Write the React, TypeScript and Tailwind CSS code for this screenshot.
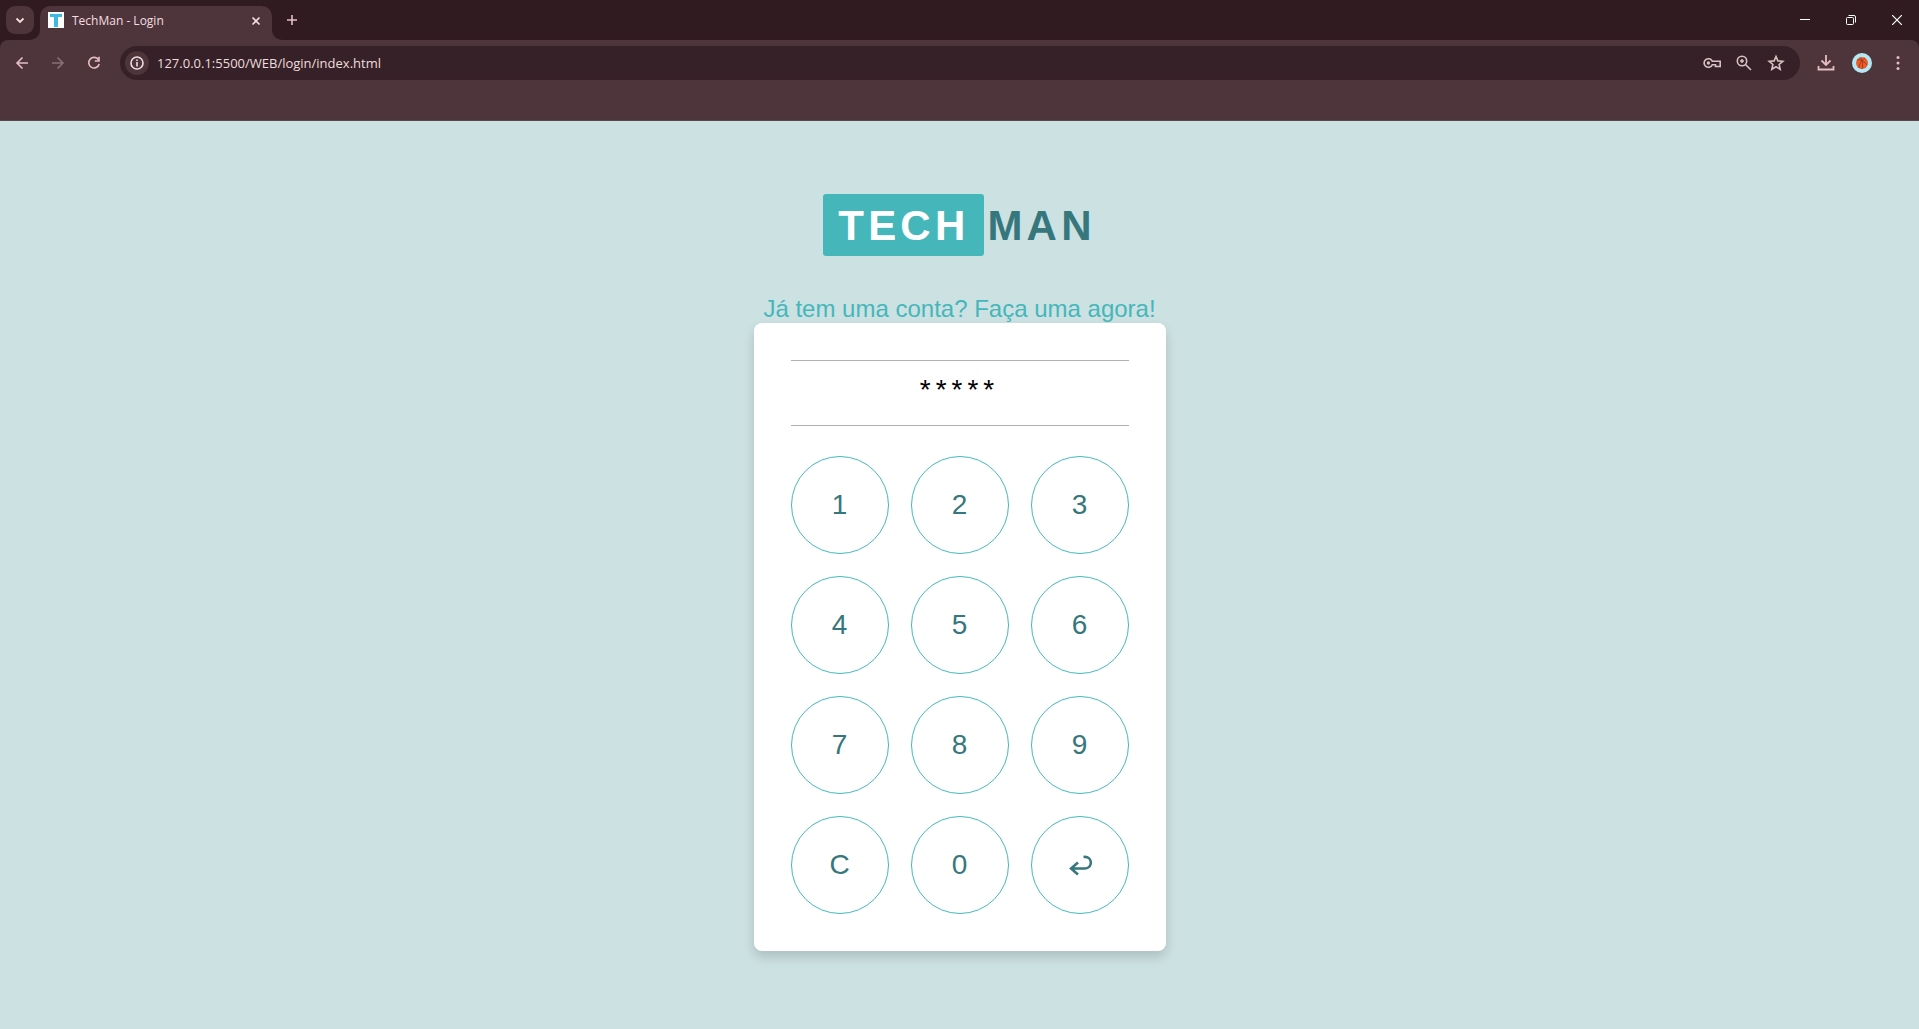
import React from "react";

const keys = ["1", "2", "3", "4", "5", "6", "7", "8", "9", "C", "0", "enter"];

function Icon({ size = 18, children, width = 1.6 }: { size?: number; width?: number; children: React.ReactNode }) {
  return (
    <svg width={size} height={size} viewBox={`0 0 ${size} ${size}`} fill="none" stroke="currentColor" strokeWidth={width} aria-hidden="true">
      {children}
    </svg>
  );
}

function IconButton({ label, className = "", children }: { label: string; className?: string; children: React.ReactNode }) {
  return (
    <button type="button" aria-label={label} className={`flex shrink-0 items-center justify-center rounded-full ${className}`}>
      {children}
    </button>
  );
}

function TabStrip() {
  return (
    <div className="flex h-10 items-end bg-[#2f1b20]">
      <div className="flex h-full items-center pl-[6px]">
        <button type="button" aria-label="Search tabs" className="flex size-7 items-center justify-center rounded-[9px] bg-[#4e353b] text-[#f5dde0]">
          <Icon size={12} width={1.8}><path d="M2.500 4.500 6 8l3.500-3.500" /></Icon>
        </button>
      </div>
      <div className="flex w-[6px] self-end">
        <svg className="-ml-1 h-[10px] w-[10px] shrink-0" viewBox="0 0 10 10" aria-hidden="true"><path d="M10 0A10 10 0 0 1 0 10H10Z" fill="#4e353b" /></svg>
      </div>
      <div className="flex h-[34px] w-[232px] items-center rounded-t-[10px] bg-[#4e353b] pr-[10px] pl-2">
        <svg className="mb-[6px] size-4 shrink-0" viewBox="0 0 16 16" aria-hidden="true">
          <path fill="#fff" d="M0 0h16v16H0z" />
          <path fill="#3fb8e4" d="M2 2h12v3h-4v10H6V5H2z" />
        </svg>
        <span className="mb-1 ml-2 grow text-[12px] text-[#f5dde0]">TechMan - Login</span>
        <IconButton label="Close tab" className="mb-[5px] size-3 text-[#f5dde0]">
          <Icon size={12}><path d="m2.500 2.500 7 7m0-7-7 7" /></Icon>
        </IconButton>
      </div>
      <svg className="h-[10px] w-[10px] shrink-0" viewBox="0 0 10 10" aria-hidden="true"><path d="M0 0A10 10 0 0 0 10 10H0Z" fill="#4e353b" /></svg>
      <div className="flex h-full grow items-center justify-between">
        <IconButton label="New tab" className="size-5 text-[#e5bdc5]">
          <Icon size={12}><path d="M6 1v10M1 6h10" /></Icon>
        </IconButton>
        <div className="-mr-px flex text-white">
          <IconButton label="Minimize" className="h-10 w-[46px]"><Icon size={10} width={1}><path d="M0 4.5h10" /></Icon></IconButton>
          <IconButton label="Restore" className="h-10 w-[46px]">
            <Icon size={10} width={1}><rect x=".5" y="2.5" width="7" height="7" rx="1" /><path d="M2.5.5H8A1.5 1.5 0 0 1 9.5 2V7.5" /></Icon>
          </IconButton>
          <IconButton label="Close" className="h-10 w-[46px]"><Icon size={10} width={1.2}><path d="m0 0 10 10M10 0 0 10" /></Icon></IconButton>
        </div>
      </div>
    </div>
  );
}

function Toolbar() {
  return (
    <div className="bg-[#2f1b20]">
      <div className="flex h-[81px] items-start rounded-t-[8px] border-b border-[#5d464b] bg-[#4e353b] pt-[6px] text-[#e5bdc5]">
        <div className="flex h-[34px] items-center gap-2 pl-2">
          <IconButton label="Back" className="size-7"><Icon size={14}><path d="M13 7H2M7.5 1.5 2 7l5.5 5.5" /></Icon></IconButton>
          <IconButton label="Forward" className="size-7 text-[#8b6f75]"><Icon size={14}><path d="M1 7h11M6.5 1.5 12 7l-5.5 5.5" /></Icon></IconButton>
          <IconButton label="Reload" className="size-7">
            <Icon size={14}><path d="M11.5 3.8A5.3 5.3 0 1 0 12.2 8" /><path d="M12 .8V5H7.8" /></Icon>
          </IconButton>
        </div>
        <div className="ml-3 flex h-[34px] grow items-center rounded-full bg-[#352127] pr-[15px] pl-[5px] text-[#d7c1c4]">
          <IconButton label="Site information" className="size-6 bg-[#4e353b] text-[#f0dcdf]">
            <Icon size={14}><circle cx="7" cy="7" r="6" /><path d="M7 6v4.5M7 3.5V5" /></Icon>
          </IconButton>
          <input aria-label="Address" readOnly defaultValue="127.0.0.1:5500/WEB/login/index.html" className="ml-2 min-w-0 grow bg-transparent text-[13px] leading-5 text-[#f0dcdf] outline-none" />
          <div className="flex items-center gap-[14px]">
            <IconButton label="Passwords" className="size-[18px]">
              <Icon size={18}><path d="M9.3 7.2A4.3 4.3 0 1 0 9.3 10.8H12.5V12.5H17.2V7.2Z" /><circle cx="5.4" cy="9" r=".9" /></Icon>
            </IconButton>
            <IconButton label="Zoom" className="size-[18px]">
              <Icon size={18}><circle cx="7" cy="7" r="4.7" /><path d="m10.5 10.5 5.5 5.5M7 5v4M5 7h4" /></Icon>
            </IconButton>
            <IconButton label="Bookmark this page" className="size-[18px]">
              <Icon size={18}><path d="m9 2.5 1.9 4.4 4.9.4-3.7 3.2 1.1 4.8L9 12.8l-4.2 2.5 1.1-4.8-3.7-3.2 4.9-.4Z" /></Icon>
            </IconButton>
          </div>
        </div>
        <div className="flex h-[34px] items-center pr-[3px] pl-2">
          <IconButton label="Downloads" className="size-9">
            <Icon size={18} width={1.8}><path d="M9 1v10M4.5 6.5 9 11l4.500-4.500M1.500 12v3.500h15V12" /></Icon>
          </IconButton>
          <IconButton label="Profile" className="size-9">
            <svg className="size-5" viewBox="0 0 20 20" fill="none" aria-hidden="true">
              <circle cx="10" cy="10" r="10" fill="#b3e8f4" />
              <circle cx="10" cy="10" r="6" fill="#f35b24" />
              <path d="M5 7c4-1 7 1 10 5M8 4.5C11 8 11 12 10 16M13 5C9 8 7 11 7 15" stroke="#75382c" strokeWidth=".8" />
            </svg>
          </IconButton>
          <IconButton label="Menu" className="size-9">
            <svg className="size-4" viewBox="0 0 16 16" fill="currentColor" aria-hidden="true"><circle cx="8" cy="2.5" r="1.5" /><circle cx="8" cy="8" r="1.5" /><circle cx="8" cy="13.5" r="1.5" /></svg>
          </IconButton>
        </div>
      </div>
    </div>
  );
}

export default function App() {
  return (
    <div className="flex min-h-screen flex-col bg-[#cce1e2] font-['Open_Sans','Noto_Sans',sans-serif]">
      <header>
        <TabStrip />
        <Toolbar />
      </header>
      <main className="flex grow flex-col items-center justify-center pb-[6px] font-['Liberation_Sans',Arial,sans-serif]">
        <h1 className="flex items-baseline gap-[3px] text-[42px] leading-[48px] font-bold tracking-widest text-[#35777d]">
          <span className="rounded-[3px] bg-[#45b7bb] px-[15px] pt-2 pb-[6px] text-white">TECH</span>
          <span>MAN</span>
        </h1>
        <a href="#cadastro" className="mt-[38px] text-[24px] leading-[29px] text-[#45b7bb]">Já tem uma conta? Faça uma agora!</a>
        <form className="rounded-[8px] bg-white p-[37px] shadow-[0_6px_12px_rgba(0,0,0,0.15)]" onSubmit={(e) => e.preventDefault()}>
          <input aria-label="Senha" readOnly defaultValue="*****" className="h-[66px] w-[338px] border-y border-[#b0b0b0] pb-[6px] text-center text-[28px] tracking-[5px] text-black outline-none" />
          <div className="mt-[30px] grid grid-cols-3 gap-[22px]">
            {keys.map((key) => (
              <button key={key} type="button" aria-label={key === "enter" ? "Entrar" : key} className="flex size-[98px] items-center justify-center rounded-full border border-[#45b7bb] text-[28px] leading-8 text-[#35777d]">
                {key === "enter" ? (
                  <svg className="size-6" viewBox="0 0 24 24" fill="none" stroke="currentColor" strokeWidth="2.5" aria-hidden="true">
                    <path d="M15.5 4C25 2.5 25 15.500 17 15.500H3M10 9.500 3 15.500l7 6" />
                  </svg>
                ) : key}
              </button>
            ))}
          </div>
        </form>
      </main>
    </div>
  );
}
